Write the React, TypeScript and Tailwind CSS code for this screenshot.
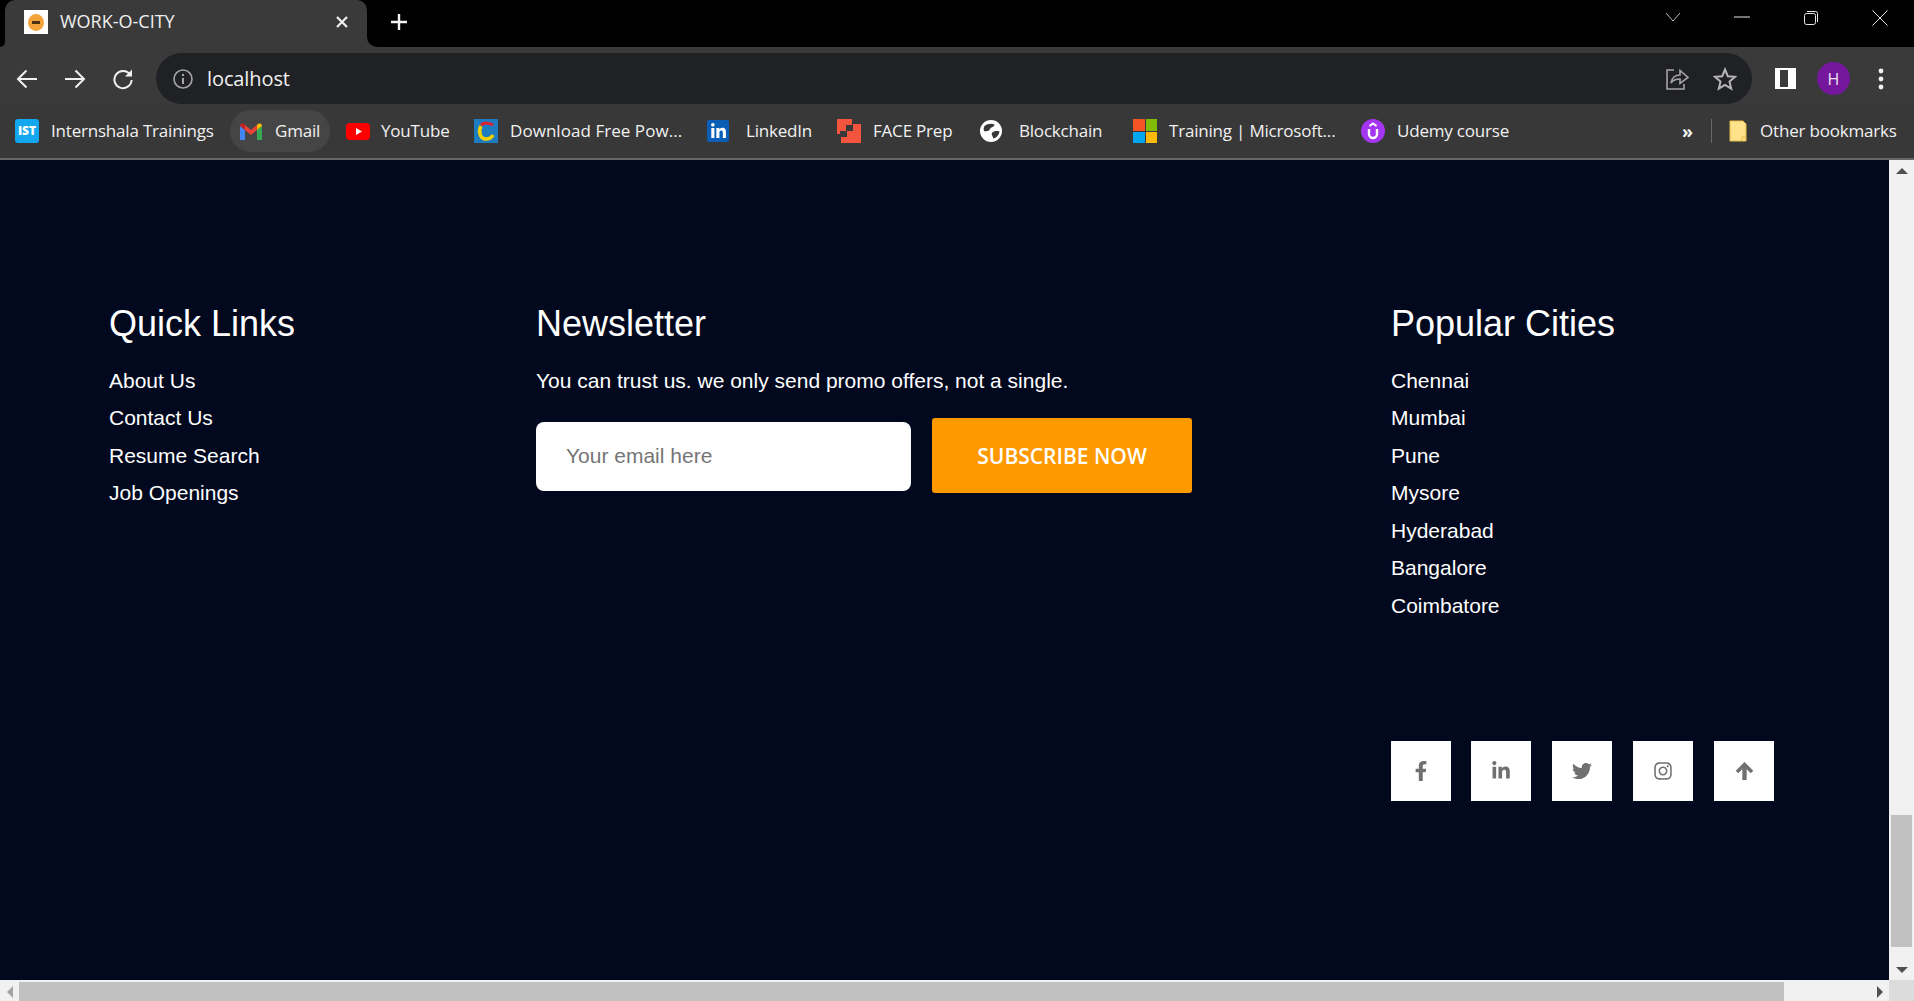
import { FaFacebookF, FaLinkedinIn, FaTwitter, FaInstagram } from "react-icons/fa";

const ui = "font-['Open_Sans','Noto_Sans',sans-serif]";

function Tab() {
  return (
    <div className="relative ml-[5px] flex h-[47px] w-[362px] items-center rounded-t-[10px] bg-[#3a3a3a] pb-[3px] pl-[19px]">
      <svg className="absolute bottom-0 left-[-5px]" width="5" height="5" viewBox="0 0 5 5"><path d="M0 5 A5 5 0 0 0 5 0 V5Z" fill="#3a3a3a" /></svg>
      <svg className="absolute bottom-0 right-[-10px]" width="10" height="10" viewBox="0 0 10 10"><path d="M0 0 A10 10 0 0 0 10 10 H0Z" fill="#3a3a3a" /></svg>
      <div className="flex h-6 w-6 items-center justify-center bg-white">
        <svg width="16" height="17" viewBox="0 0 16 17"><ellipse cx="8" cy="8.5" rx="8" ry="8.5" fill="#f2a33a" /><rect x="4" y="7" width="8" height="3" fill="#4a3410" /></svg>
      </div>
      <span className="ml-3 mb-[2px] w-[281px] text-[18px] leading-none text-[#f0f0f0]">WORK-O-CITY</span>
      <svg width="14" height="14" viewBox="0 0 14 14" className="ml-[-6px]"><path d="M2 2 12 12M12 2 2 12" stroke="#f2f2f2" strokeWidth="2.2" /></svg>
    </div>
  );
}

function WindowControls() {
  return (
    <div className="ml-auto flex h-full items-start pt-[10px]">
      <svg width="16" height="14" viewBox="0 0 16 14" className="mr-[53px]"><path d="M1 3 8 11 15 3" fill="none" stroke="#bdbdbd" strokeWidth="1" /></svg>
      <svg width="16" height="14" viewBox="0 0 16 14" className="mr-[53px]"><path d="M0 7H16" stroke="#e8e8e8" strokeWidth="1" /></svg>
      <svg width="16" height="16" viewBox="0 0 16 16" className="mr-[53px]"><rect x="1.5" y="3.5" width="11" height="11" rx="2" fill="none" stroke="#e8e8e8" /><path d="M4 1.5H12.5A2 2 0 0 1 14.5 3.5V12" fill="none" stroke="#e8e8e8" /></svg>
      <svg width="16" height="16" viewBox="0 0 16 16" className="mr-[26px]"><path d="M0.5 0.5 15.5 15.5M15.5 0.5 0.5 15.5" stroke="#e8e8e8" /></svg>
    </div>
  );
}

function Toolbar() {
  return (
    <div className="flex h-[57px] items-end bg-[#3a3a3a] pl-[16px]">
      <div className="flex h-[51px] items-center">
        <svg width="22" height="20" viewBox="0 0 22 20" className="mr-[26px]"><path d="M21 10H2M10.5 1.5 2 10l8.5 8.5" fill="none" stroke="#f1f1f1" strokeWidth="2" /></svg>
        <svg width="22" height="20" viewBox="0 0 22 20" className="mr-[26px]"><path d="M1 10H20M11.5 1.5 20 10l-8.5 8.5" fill="none" stroke="#f1f1f1" strokeWidth="2" /></svg>
        <svg width="22" height="22" viewBox="0 0 22 22" className="mr-[22px]"><path d="M18 6.5A8.6 8.6 0 1 0 19.6 12" fill="none" stroke="#f1f1f1" strokeWidth="2" /><path d="M20 1.5V8.5H13Z" fill="#f1f1f1" /></svg>
      </div>
      <div className="flex h-[51px] w-[1596px] items-center rounded-full bg-[#202124] pl-[17px]">
        <svg width="20" height="20" viewBox="0 0 20 20"><circle cx="10" cy="10" r="9" fill="none" stroke="#a5a5a5" strokeWidth="1.6" /><path d="M10 9V15" stroke="#a5a5a5" strokeWidth="2" /><circle cx="10" cy="6" r="1.2" fill="#a5a5a5" /></svg>
        <span className="ml-[14px] text-[20px] leading-none tracking-[-0.1px] text-[#f1f1f1]">localhost</span>
        <div className="ml-auto mr-[15px] flex items-center">
          <svg width="24" height="24" viewBox="0 0 24 24" className="mr-[24px]"><path d="M9 3H2V22H19V17" fill="none" stroke="#a5a5a5" strokeWidth="1.6" /><path d="M6 16C7 10 11 8 15 8V3.5L23 10.5 15 16.5V12C11 12 8 13 6 16Z" fill="none" stroke="#a5a5a5" strokeWidth="1.6" /></svg>
          <svg width="24" height="24" viewBox="0 0 24 24"><path d="M12 2.5 14.8 9.2 22 9.8 16.5 14.5 18.2 21.6 12 17.8 5.8 21.6 7.5 14.5 2 9.8 9.2 9.2Z" fill="none" stroke="#b5b5b5" strokeWidth="2" /></svg>
        </div>
      </div>
      <div className="flex h-[51px] items-center">
        <div className="ml-[23px] h-[21px] w-[21px] border-y-[2px] border-l-[5px] border-r-[8px] border-white" />
        <div className="ml-[21px] flex h-[33px] w-[33px] items-center justify-center rounded-full bg-[#74179c] text-[16px] text-[#f0e6f5]">H</div>
        <svg width="6" height="22" viewBox="0 0 6 22" className="ml-[28px]"><circle cx="3" cy="3" r="2.4" fill="#f1f1f1" /><circle cx="3" cy="11" r="2.4" fill="#f1f1f1" /><circle cx="3" cy="19" r="2.4" fill="#f1f1f1" /></svg>
      </div>
    </div>
  );
}

const bmText = "mb-[2px] whitespace-nowrap text-[17px] leading-none tracking-[-0.2px] text-[#f1f1f1]";

function Bm({ icon, label, box, text = "ml-3" }: { icon: React.ReactNode; label: string; box: string; text?: string }) {
  return (
    <div className={`flex shrink-0 items-center ${box}`}>
      <div className="flex w-6 shrink-0 justify-center">{icon}</div>
      <span className={`${bmText} ${text}`}>{label}</span>
    </div>
  );
}

const IstIcon = <div className="flex h-6 w-6 items-center justify-center rounded-[3px] bg-[#12a7ee] text-[12px] font-extrabold leading-none text-white">IST</div>;
const GmailIcon = (
  <svg width="22" height="17" viewBox="0 0 22 17"><path d="M0 3V17H5V7Z" fill="#4285f4" /><path d="M22 3V17H17V7Z" fill="#34a853" /><path d="M0 3 C0 0.5 2.5 0 4 1L5 2 V7Z" fill="#c5221f" /><path d="M5 2 11 7 17 2V7L11 12 5 7Z" fill="#ea4335" /><path d="M17 2 18 1C19.5 0 22 0.5 22 3L17 7Z" fill="#fbbc04" /></svg>
);
const YtIcon = <svg width="24" height="17" viewBox="0 0 24 17"><rect width="24" height="17" rx="4" fill="#f00" /><path d="M10 5 16 8.5 10 12Z" fill="#fff" /></svg>;
const DlIcon = (
  <svg width="24" height="24" viewBox="0 0 24 24"><rect width="24" height="24" fill="#1e7cc0" /><path d="M7 6C11 3 16 4 19 6" fill="none" stroke="#e02030" strokeWidth="3" /><path d="M7 7C4 12 6 20 12 20C15 20 18 18 19 16" fill="none" stroke="#f5d000" strokeWidth="3.5" /></svg>
);
const LiIcon = <div className="flex h-[22px] w-[22px] items-center justify-center rounded-[2px] bg-[#0a5eb5] text-white"><FaLinkedinIn size={17} /></div>;
const FaceIcon = <svg width="24" height="24" viewBox="0 0 24 24"><path d="M0 0H15V6H9V12H3V15H0ZM24 5V24H4V18H10V12H16V5Z" fill="#f2543d" /></svg>;
const GlobeIcon = (
  <svg width="22" height="22" viewBox="0 0 22 22"><circle cx="11" cy="11" r="11" fill="#fff" /><path d="M4.5 6C7 3.5 12 3 14.5 4.5C14.5 7 11 7 10 9C9.5 11 6.5 11.5 4 11C3.5 9 3.5 7.5 4.5 6Z" fill="#383838" /><path d="M12 13C13.5 11 17 10.5 19.5 11.5C19 15 16.5 18 13 18.5C13.5 16.5 11 15 12 13Z" fill="#383838" /></svg>
);
const MsIcon = (
  <div className="grid h-6 w-6 grid-cols-2 grid-rows-2 gap-px">
    <div className="bg-[#f35325]" /><div className="bg-[#81bc06]" /><div className="bg-[#05a6f0]" /><div className="bg-[#ffba08]" />
  </div>
);
const UdemyIcon = (
  <svg width="24" height="24" viewBox="0 0 24 24"><circle cx="12" cy="12" r="12" fill="#a435f0" /><path d="M8 10V15A4 4 0 0 0 16 15V10" fill="none" stroke="#fff" strokeWidth="2.4" /><path d="M8.5 7 12 4.5 15.5 7" fill="none" stroke="#fff" strokeWidth="2" /></svg>
);
const FolderIcon = (
  <svg width="18" height="22" viewBox="0 0 18 22"><path d="M1 1H14L17 4V21H1Z" fill="#ffe28a" stroke="#e8bd4a" strokeWidth="1" /><path d="M13 21V17H17" fill="none" stroke="#e8bd4a" /></svg>
);

function Bookmarks() {
  return (
    <div className="flex h-[56px] items-center border-b-2 border-[#676767] bg-[#383838] pl-[15px]">
      <Bm icon={IstIcon} label="Internshala Trainings" box="w-[215px]" />
      <div className="flex h-[42px] w-[100px] items-center rounded-full bg-[#454545] pl-[10px]">
        <div className="flex w-[22px] justify-center">{GmailIcon}</div>
        <span className={`${bmText} ml-[13px]`}>Gmail</span>
      </div>
      <Bm icon={YtIcon} label="YouTube" box="ml-4 w-[104px]" text="ml-[11px]" />
      <Bm icon={DlIcon} label="Download Free Pow..." box="ml-6 w-[232px]" text="ml-3 tracking-[0.05px]" />
      <Bm icon={LiIcon} label="LinkedIn" box="w-[107px]" text="ml-4" />
      <Bm icon={FaceIcon} label="FACE Prep" box="ml-6 w-[117px]" />
      <Bm icon={GlobeIcon} label="Blockchain" box="ml-[25px] w-[130px]" text="ml-4" />
      <Bm icon={MsIcon} label="Training | Microsoft..." box="ml-6 w-[204px]" text="ml-3 tracking-[-0.1px]" />
      <Bm icon={UdemyIcon} label="Udemy course" box="ml-6 w-[150px]" text="ml-3 tracking-[-0.1px]" />
      <span className="ml-[171px] text-[18px] font-bold leading-none text-[#f1f1f1]">»</span>
      <div className="ml-[18px] h-6 w-px bg-[#686868]" />
      <div className="ml-[17px] flex w-[18px] justify-center">{FolderIcon}</div>
      <span className={`${bmText} ml-[13px]`}>Other bookmarks</span>
    </div>
  );
}

function LinkList({ items }: { items: string[] }) {
  return (
    <ul className="mt-[15.6px] text-[21px] leading-[37.5px] text-white">
      {items.map((t) => <li key={t}>{t}</li>)}
    </ul>
  );
}

function Social({ children, className = "" }: { children: React.ReactNode; className?: string }) {
  return <div className={`flex h-[60px] w-[60px] items-center justify-center bg-white text-[20px] text-[#707070] ${className}`}>{children}</div>;
}

function Footer() {
  return (
    <div className="grid flex-1 grid-cols-[427px_855px_1fr] pl-[109px] pt-[142px] font-['Liberation_Sans',Arial,sans-serif]">
      <div>
        <h2 className="text-[36px] leading-[44px] text-white">Quick Links</h2>
        <LinkList items={["About Us", "Contact Us", "Resume Search", "Job Openings"]} />
      </div>
      <div>
        <h2 className="text-[36px] leading-[44px] text-white">Newsletter</h2>
        <p className="mt-4 text-[21px] leading-[37.5px] text-white">You can trust us. we only send promo offers, not a single.</p>
        <div className="mt-[18px] flex items-center gap-[21px]">
          <input placeholder="Your email here" className="mt-[3px] h-[69px] w-[375px] rounded-[8px] bg-white pb-[2px] pl-[30px] text-[21px] outline-none placeholder:text-[#757575]" />
          <button className={`h-[75px] w-[260px] rounded-[3px] bg-[#ff9900] pt-[3px] text-[21px] font-semibold text-white ${ui}`}>SUBSCRIBE NOW</button>
        </div>
      </div>
      <div>
        <h2 className="text-[36px] leading-[44px] text-white">Popular Cities</h2>
        <LinkList items={["Chennai", "Mumbai", "Pune", "Mysore", "Hyderabad", "Bangalore", "Coimbatore"]} />
        <div className="mt-[117.4px] flex">
          <Social><FaFacebookF /></Social>
          <Social className="ml-5"><FaLinkedinIn /></Social>
          <Social className="ml-[21px]"><FaTwitter /></Social>
          <Social className="ml-[21px]"><FaInstagram /></Social>
          <Social className="ml-[21px]">
            <svg width="19" height="19" viewBox="0 0 19 19"><path d="M2 10 9.5 2.5 17 10" fill="none" stroke="#707070" strokeWidth="3.6" /><path d="M9.5 4V18" stroke="#707070" strokeWidth="4.4" /></svg>
          </Social>
        </div>
      </div>
    </div>
  );
}

function VScrollbar() {
  return (
    <div className="flex w-[25px] shrink-0 flex-col items-center bg-[#f1f1f1]">
      <div className="flex h-[21px] items-center justify-center">
        <div className="h-0 w-0 border-x-[6px] border-b-[6px] border-x-transparent border-b-[#505050]" />
      </div>
      <div className="mt-[634px] h-[132px] w-[21px] bg-[#c1c1c1]" />
      <div className="mt-[13px] flex h-[20px] items-center justify-center">
        <div className="h-0 w-0 border-x-[6px] border-t-[6px] border-x-transparent border-t-[#505050]" />
      </div>
    </div>
  );
}

function HScrollbar() {
  return (
    <div className="flex h-[21px] shrink-0 bg-[#f1f1f1]">
      <div className="flex w-[19px] items-center justify-center pt-[2px]">
        <div className="h-0 w-0 border-y-[6px] border-r-[6px] border-y-transparent border-r-[#a3a3a3]" />
      </div>
      <div className="mt-[2px] w-[1765px] bg-[#c1c1c1]" />
      <div className="flex w-[105px] items-center justify-end pr-[6px] pt-[2px]">
        <div className="h-0 w-0 border-y-[6px] border-l-[6px] border-y-transparent border-l-[#505050]" />
      </div>
      <div className="w-[25px] bg-[#dcdcdc]" />
    </div>
  );
}

export default function App() {
  return (
    <div className={`flex h-[1001px] w-[1914px] flex-col overflow-hidden bg-black ${ui}`}>
      <div className="flex h-[47px] shrink-0 items-center bg-black">
        <Tab />
        <svg width="18" height="18" viewBox="0 0 18 18" className="mb-[3px] ml-[23px]"><path d="M9 1V17M1 9H17" stroke="#f4f4f4" strokeWidth="2.4" /></svg>
        <WindowControls />
      </div>
      <Toolbar />
      <Bookmarks />
      <div className="flex min-h-0 flex-1">
        <div className="flex min-w-0 flex-1 bg-[#02091e]"><Footer /></div>
        <VScrollbar />
      </div>
      <HScrollbar />
    </div>
  );
}
